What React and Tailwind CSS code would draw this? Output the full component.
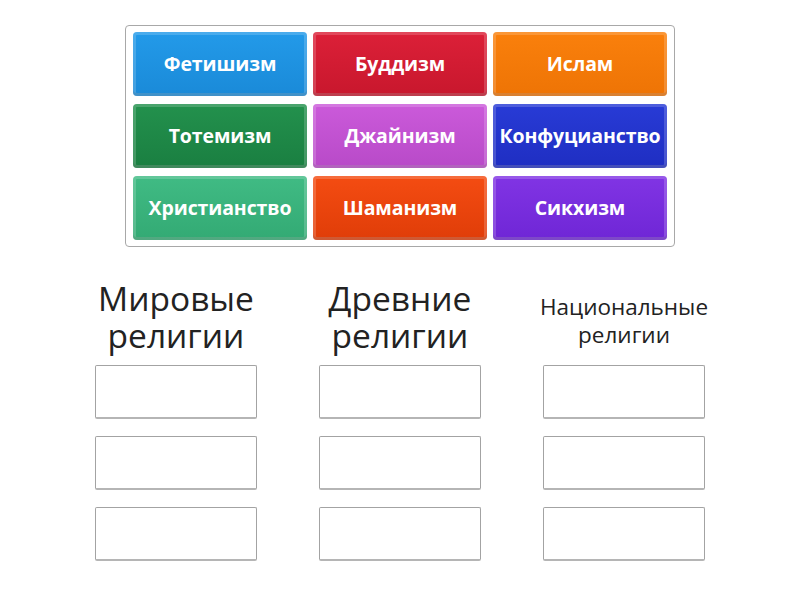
import React from "react";

const tiles = [
  { t: "Фетишизм", c: "bg-gradient-to-b from-[#239ae9] to-[#1a8ad8]" },
  { t: "Буддизм", c: "bg-gradient-to-b from-[#dc2038] to-[#c8172d]" },
  { t: "Ислам", c: "bg-gradient-to-b from-[#fa800c] to-[#ee7405]" },
  { t: "Тотемизм", c: "bg-gradient-to-b from-[#23914d] to-[#1a7f41]" },
  { t: "Джайнизм", c: "bg-gradient-to-b from-[#cb5ada] to-[#b84ac8]" },
  { t: "Конфуцианство", c: "bg-gradient-to-b from-[#283bd6] to-[#1f2ec2]" },
  { t: "Христианство", c: "bg-gradient-to-b from-[#40bb84] to-[#33aa74]" },
  { t: "Шаманизм", c: "bg-gradient-to-b from-[#f44c12] to-[#e03d08]" },
  { t: "Сикхизм", c: "bg-gradient-to-b from-[#8134e4] to-[#6f26d6]" },
];

function Column({ title, small }) {
  return (
    <div className="w-[162px] flex flex-col items-center">
      {small ? (
        <div className="h-[88px] w-full flex items-center justify-center">
          <div className="text-[22.5px] leading-[28px] text-[#222] text-center whitespace-nowrap">
            Национальные<br />религии
          </div>
        </div>
      ) : (
        <div className="h-[88px] w-full flex items-center justify-center pb-[9px]">
          <div className="text-[33.5px] leading-[37px] text-[#222] text-center whitespace-nowrap">
            {title[0]}<br />{title[1]}
          </div>
        </div>
      )}
      <div className="flex flex-col gap-[17px] w-full">
        {[0, 1, 2].map((i) => (
          <div key={i} className="h-[54px] w-full bg-white border border-[#a3a3a3] border-b-[#b5b5b5] border-b-2 rounded-[2px]" />
        ))}
      </div>
    </div>
  );
}

export default function App() {
  return (
    <div className="w-[800px] h-[600px] bg-white" style={{ fontFamily: '"Open Sans", sans-serif' }}>
      <div className="pt-[25px] flex justify-center">
        <div className="w-[550px] border border-[#a8a8a8] rounded-[4px] px-[7px] py-[6px] grid grid-cols-3 gap-x-[6px] gap-y-[8px]">
          {tiles.map((x) => (
            <div
              key={x.t}
              className={`h-[64px] rounded-[4px] flex items-center justify-center text-white font-bold text-[19.5px] tracking-[-0.1px] whitespace-nowrap shadow-[inset_0_0_0_3px_rgba(255,255,255,0.18),inset_0_-3px_0_rgba(0,0,0,0.12)] ${x.c}`}
            >
              {x.t}
            </div>
          ))}
        </div>
      </div>
      <div className="mt-[30px] flex justify-center gap-[62px]">
        <Column title={["Мировые", "религии"]} />
        <Column title={["Древние", "религии"]} />
        <Column small />
      </div>
    </div>
  );
}
